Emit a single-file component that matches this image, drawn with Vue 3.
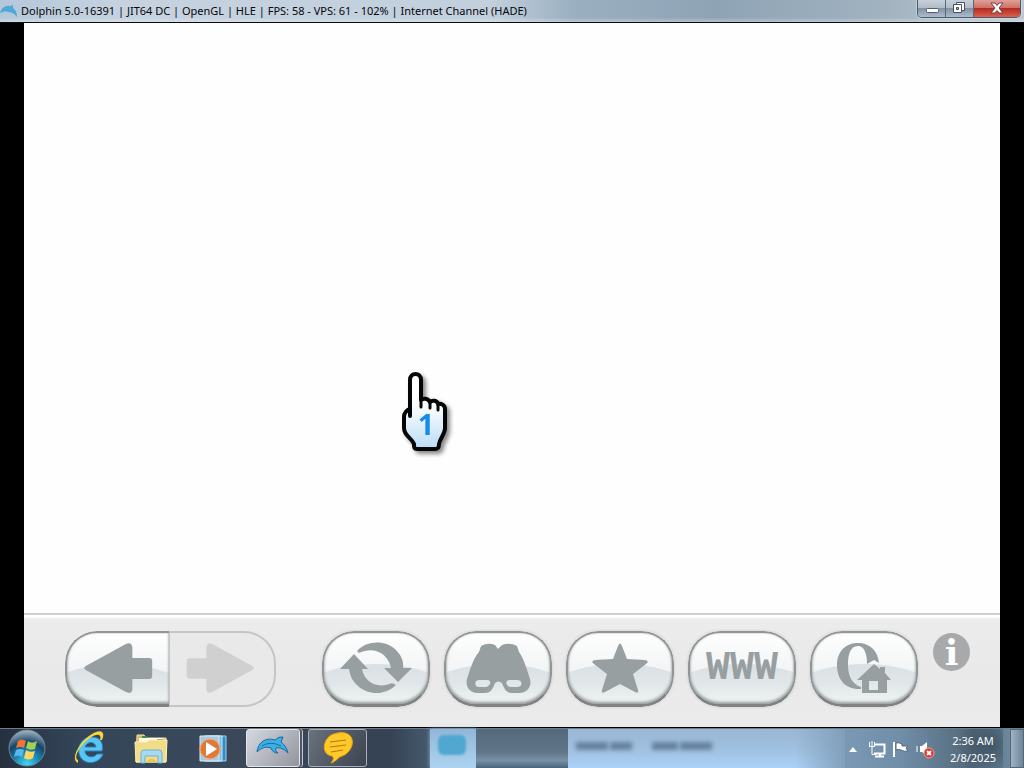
<script setup>
const title = 'Dolphin 5.0-16391 | JIT64 DC | OpenGL | HLE | FPS: 58 - VPS: 61 - 102% | Internet Channel (HADE)'
</script>

<template>
  <div class="desktop">
    <header class="titlebar">
      <svg class="title-icon" viewBox="0 0 18 14" aria-hidden="true">
        <path d="M0 9C1 4 6 1 10 2L13 1L13 4C16 6 17 9 17 13C14 9 11 8 8 8C5 7 3 8 0 9Z" fill="#4fa9d8" />
      </svg>
      <h1>{{ title }}</h1>
      <div class="window-controls">
        <button aria-label="Minimize">
          <svg viewBox="0 0 27 17"><rect x="8.500" y="8.500" width="12" height="4" rx="1" fill="#fff" stroke="#525c6b" /></svg>
        </button>
        <button aria-label="Restore">
          <svg viewBox="0 0 27 17">
            <path d="M10.500 2.500H18.500V10.500H10.500Z" fill="#fff" stroke="#46505f" />
            <path d="M7.500 4.500H15.500V12.500H7.500Z" fill="#fff" stroke="#46505f" />
            <path d="M10.500 7.500H12.500V9.500H10.500Z" fill="#9ba8b7" stroke="#46505f" />
          </svg>
        </button>
        <button class="close" aria-label="Close">
          <svg viewBox="0 0 46 17"><path d="M17 3h4l2 2.500 2-2.500h4l-4 5 4 5h-4l-2-2.500-2 2.500h-4l4-5z" fill="#fff" stroke="#6b4048" /></svg>
        </button>
      </div>
    </header>

    <main class="screen">
      <section class="page">
        <svg class="hand" viewBox="0 0 54 88" aria-label="Pointer 1">
          <defs>
            <linearGradient id="handFill" x1="0" y1="0" x2="0" y2="1">
              <stop offset=".4" stop-color="#fff" />
              <stop offset="1" stop-color="#b9dcf6" />
            </linearGradient>
          </defs>
          <path d="M9 45V9C9 1 20 1 20 9V29C22 27 27 27 29 31C31 29 36 29 37 33C40 32 44 34 44 38V57C44 63 39 67 38 73C38 78 36 78 34 78H16C13 78 13 76 13 73C11 67 3 65 3 57V46C3 42 6 39 9 38" fill="url(#handFill)" stroke="#050505" stroke-width="4" stroke-linejoin="round" stroke-linecap="round" />
          <path d="M20 29V36M29 31V37M37 34V39" fill="none" stroke="#050505" stroke-width="3" stroke-linecap="round" />
          <text x="25" y="64" text-anchor="middle" class="hand-number">1</text>
        </svg>
      </section>

      <nav class="toolbar" aria-label="Browser">
        <div class="history">
          <button class="back" aria-label="Back">
            <svg viewBox="0 0 105 76"><path d="M21 35L61 13Q67 10 68 16V27H85Q88 27 88 30V45Q88 48 85 48H68V59Q67 64 61 61L21 39Q18 37 21 35Z" /></svg>
          </button>
          <button class="forward" aria-label="Forward" disabled>
            <svg viewBox="0 0 106 76"><path d="M84 35L44 13Q38 10 37 16V27H20Q17 27 17 30V45Q17 48 20 48H37V59Q38 64 44 61L84 39Q87 37 84 35Z" /></svg>
          </button>
        </div>
        <div class="actions">
          <button class="pill" aria-label="Reload">
            <svg viewBox="0 0 108 76">
              <path d="M35 20C45 9 64 9 74 19C79 24 82 30 81 37H90L76 51L62 37H69C67 24 53 14 37 22Z" />
              <path d="M18 38L32 23L46 38H40C42 50 55 59 70 52L74 54C64 64 47 65 36 55C30 50 28 44 27 38Z" />
            </svg>
          </button>
          <button class="pill" aria-label="Search">
            <svg viewBox="0 0 108 76">
              <path fill-rule="evenodd" d="M37 15Q44 11 51 14L54 18L58 14Q66 11 73 15L75 21C79 26 83 38 86 48C88 56 83 62 75 62H68C62 62 60 57 58 52Q54 49 51 52C49 57 47 62 41 62H34C26 62 21 56 23 48C26 38 30 26 35 21ZM35 49C30 49 30 56 35 56H41C46 56 49 49 43 49ZM66 49C60 49 62 56 67 56H73C79 56 79 49 73 49Z" />
            </svg>
          </button>
          <button class="pill" aria-label="Favorites">
            <svg viewBox="0 0 108 76"><path d="M52 15Q54 10 56 15L61 28L79 29Q84 30 80 33L67 43L72 59Q73 63 69 61L54 53L39 61Q35 63 36 59L41 43L28 33Q24 30 29 29L47 28Z" /></svg>
          </button>
          <button class="pill www"><span>WWW</span></button>
          <button class="pill" aria-label="Home page">
            <svg viewBox="0 0 108 76">
              <path d="M51 58C36 59 27 49 27 34C27 20 36 12 48 12C60 12 68 20 69 32L64 29L57 33C57 22 54 15 48 15C40 15 38 24 38 34C38 45 42 53 51 56Z" />
              <path fill-rule="evenodd" d="M64 33L70 38V36H75V42L81 49H77V62H52V49H47ZM59 50V59H68V50Z" />
            </svg>
          </button>
        </div>
        <button class="info" aria-label="Information">i</button>
      </nav>
    </main>

    <footer class="taskbar">
      <div class="launchers">
        <button aria-label="Start">
          <svg viewBox="0 0 38 40">
            <defs>
              <radialGradient id="orb" cx=".5" cy=".95" r=".95">
                <stop offset="0" stop-color="#43d7f5" /><stop offset=".4" stop-color="#167fac" />
                <stop offset=".65" stop-color="#174466" /><stop offset="1" stop-color="#a9bac5" />
              </radialGradient>
            </defs>
            <circle cx="19" cy="20" r="18" fill="url(#orb)" stroke="#6d8799" />
            <path d="M10 13Q14 10 18 13L16 20Q12 18 8 20Z" fill="#f27336" />
            <path d="M20 13Q24 16 29 13L27 21Q22 23 18 20Z" fill="#a3cf52" />
            <path d="M8 22Q12 20 16 22L14 29Q10 26 6 29Z" fill="#59b8ed" />
            <path d="M18 22Q22 25 27 23L25 30Q20 33 16 30Z" fill="#ffd55b" />
          </svg>
        </button>
        <button aria-label="Internet Explorer">
          <svg viewBox="0 0 38 40">
            <path d="M32 23H15C15 29 23 31 27 26H33C30 35 17 38 11 30C5 21 11 9 22 9C30 9 34 15 32 23ZM15 19H26C25 13 17 13 15 19Z" fill="#58c5f2" stroke="#2382bd" fill-rule="evenodd" />
            <path d="M8 35C-1 31 11 12 22 6C30 1 36 3 32 12L30 12C32 6 27 5 20 10C9 18 3 30 8 32Z" fill="#f8d638" />
          </svg>
        </button>
        <button aria-label="File Explorer">
          <svg viewBox="0 0 38 40">
            <path d="M5 7H12L14 10H34V34H4Z" fill="#d9b966" stroke="#f4e4a3" />
            <path d="M7 10H31V17H7Z" fill="#fffbea" /><path d="M10 8h5v2h-5zM25 11h6v2h-6z" fill="#3b8956" />
            <path d="M3 14H15L17 12H35L34 34H4Z" fill="#f3dc87" stroke="#fff2b9" />
            <path d="M9 35V25Q9 22 12 22H27Q30 22 30 25V35H26V28H13V35Z" fill="#a6daef" stroke="#6bb3d6" />
            <path d="M14 34Q20 27 25 34Z" fill="#edc458" />
          </svg>
        </button>
        <button aria-label="Media Player">
          <svg viewBox="0 0 38 40">
            <path d="M13 8H32V33H13Z" fill="#388bc0" stroke="#97d6f4" /><path d="M10 8H28V33H10Z" fill="#76bde3" stroke="#c6ebfc" />
            <path d="M6 8H25V33H6Z" fill="#a4c8dd" stroke="#d8eaf3" />
            <circle cx="16" cy="21" r="10" fill="#df793a" stroke="#f5b181" /><path d="M12 14L23 21L12 28Z" fill="#fff" />
          </svg>
        </button>
      </div>
      <button class="task stacked" aria-label="Dolphin">
        <svg viewBox="0 0 38 38">
          <path d="M3 23C4 13 12 8 21 11Q25 7 29 8L27 13C31 16 33 20 34 24C30 20 26 18 22 19C21 21 22 23 24 24C20 24 18 22 17 19C12 17 7 19 3 23Z" fill="#3dafe6" stroke="#176b9b" />
          <path d="M8 17C14 13 21 14 27 17" fill="none" stroke="#176b9b" />
        </svg>
      </button>
      <button class="task" aria-label="Chat">
        <svg viewBox="0 0 38 38">
          <path d="M19 4C29 2 35 8 33 16C32 21 27 26 23 27C19 28 18 32 12 34C15 30 15 29 13 27C6 26 4 20 6 14C8 8 12 5 19 4Z" fill="#ffc928" stroke="#e9a30c" />
          <path d="M11 13L27 11M11 18L27 16M12 23L24 21" fill="none" stroke="#b27610" />
        </svg>
      </button>
      <div class="glass" aria-hidden="true">
        <div class="glass-light"><i></i></div>
        <div class="glass-dark"></div>
        <div class="glass-pane"><i></i><i></i><i></i><i></i></div>
      </div>
      <div class="tray">
        <button aria-label="Show hidden icons"><svg viewBox="0 0 24 24"><path d="M8 15L12 10L16 15Z" fill="#fff" /></svg></button>
        <button aria-label="Network">
          <svg viewBox="0 0 24 24">
            <path d="M9 7.500H19.500V16.500H9M10 19.500H19M15 17V19" fill="none" stroke="#fff" stroke-width="2" />
            <path d="M4.500 5V9.500H9.500V5M7 4V9M7 10V17.500H11" fill="none" stroke="#fff" />
          </svg>
        </button>
        <button aria-label="Action Center">
          <svg viewBox="0 0 24 24"><path d="M5 5V20" stroke="#fff" stroke-width="2" /><path d="M7 6Q10 5 13 7V9H19L17 11L19 14Q15 15 12 13Q9 12 7 13Z" fill="#fff" stroke="#53687b" /></svg>
        </button>
        <button aria-label="Volume muted">
          <svg viewBox="0 0 24 24">
            <path d="M7 9H9L14 5V19L9 15H7Z" fill="#fff" /><path d="M4 9V15" stroke="#fff" />
            <circle cx="16" cy="16" r="5" fill="#d7392f" stroke="#f0a09a" /><path d="M14 14L18 18M18 14L14 18" stroke="#fff" stroke-width="2" />
          </svg>
        </button>
      </div>
      <button class="clock"><time>2:36 AM</time><time>2/8/2025</time></button>
      <button class="show-desktop" aria-label="Show desktop"></button>
    </footer>
  </div>
</template>

<style>
body { margin: 0; background: #000; }
</style>

<style scoped>
* { box-sizing: border-box; }
button { margin: 0; padding: 0; border: 0; background: none; font: inherit; color: inherit; }
svg { display: block; }
.desktop {
  display: flex;
  flex-direction: column;
  min-height: 100vh;
  font-family: "Noto Sans", "Open Sans", sans-serif;
}
.titlebar {
  display: flex;
  align-items: center;
  height: 23px;
  border-bottom: 1px solid #080b10;
  background:
    linear-gradient(#ffffff22 0 80%, #ffffff66),
    linear-gradient(90deg, #a9bfd3, #bdcbdb 12%, #b9c8d8 48%, #8ba3b7 56%, #7d96aa 70%, #91a5b5 85%, #b4c0cb);
}
.title-icon { width: 18px; height: 14px; }
h1 {
  flex: 1;
  margin: 0 0 0 3px;
  font-size: 11px;
  font-weight: 400;
  line-height: 20px;
  color: #05070a;
  white-space: nowrap;
}
.window-controls {
  display: flex;
  align-self: flex-start;
  height: 18px;
  margin-right: 3px;
  border: 1px solid #4d5b69;
  border-top: 0;
  border-radius: 0 0 5px 5px;
  overflow: hidden;
  box-shadow: 0 0 1px 1px #dbe4ec88;
}
.window-controls button {
  width: 28px;
  border-right: 1px solid #596877;
  background: linear-gradient(#c6d0da, #aebbc8 48%, #8292a3 50%, #aebdcd);
}
.window-controls svg { width: 27px; height: 17px; }
.window-controls .close {
  width: 46px;
  border-right: 0;
  background: linear-gradient(#dfa198, #ce6e62 48%, #b52a22 50%, #d9624c);
}
.window-controls .close svg { width: 46px; }
.screen {
  display: flex;
  flex: 1;
  flex-direction: column;
  padding: 0 24px 1px;
  background: #000;
}
.page { position: relative; flex: 1; min-height: 480px; background: #fefefe; }
.hand {
  position: absolute;
  left: 377px;
  top: 348px;
  width: 54px;
  height: 88px;
  filter: drop-shadow(3px 3px 2px #0007);
}
.hand-number { font: 700 29px "Open Sans", sans-serif; fill: #188bea; }
.toolbar {
  display: flex;
  align-items: flex-start;
  height: 114px;
  padding: 16px 30px 0 41px;
  border-top: 2px solid #cfcfcf;
  background: linear-gradient(#fff 0 2px, #ececec 4px, #e9e9e9 50%, #ebebeb);
}
.history { display: flex; width: 211px; height: 76px; margin-right: 46px; }
.history button { flex: 1; }
.history svg, .pill svg { position: relative; width: 100%; height: 100%; fill: #989fa1; }
.back, .pill {
  position: relative;
  overflow: hidden;
  background: linear-gradient(#fff, #f3f5f6 48%, #e9edef 72%, #f1f4f3);
}
.back::before, .pill::before {
  content: "";
  position: absolute;
  inset: 33px 0 0;
  background: linear-gradient(#d9e0e4, #e1e7e9 45%, #f1f4f3);
  clip-path: ellipse(80% 100% at 50% 100%);
}
.back::after, .pill::after {
  content: "";
  position: absolute;
  inset: 0;
  border: 2px solid #929595;
  border-bottom: 3px solid #7f8282;
  border-radius: 32px;
  box-shadow: inset 0 -2px 3px #9a9e9e, inset 0 0 2px #b5b8b8;
}
.back, .back::after { border-radius: 32px 0 0 32px; }
.back::after { border-right: 0; }
.forward { border: 2px solid #c5c5c5; border-left-width: 1px; border-radius: 0 32px 32px 0; background: #e9e9e9; }
.history .forward svg { height: 76px; margin-top: -2px; fill: #d0d0d0; }
.actions { display: flex; gap: 14px; }
.pill { width: 108px; height: 76px; border-radius: 32px; box-shadow: 0 0 2px 1px #d9d9d9; }
.www span {
  position: relative;
  font: 700 40px/76px "Liberation Mono", monospace;
  color: #989fa1;
}
.info {
  width: 37px;
  height: 38px;
  margin-top: 2px;
  margin-left: auto;
  border-radius: 50%;
  background: #a7a9aa;
  color: #fff;
  font: 700 36px/36px "DejaVu Serif", serif;
}
.taskbar {
  display: flex;
  align-items: stretch;
  height: 40px;
  border-top: 1px solid #6c7c8a;
  background: linear-gradient(90deg, #26313f, #35465a 8%, #3a485a 22%, #354354 38%, #465a6d 42%, #7f9db8 80%, #708ea8 88%, #536879 95%, #7794aa);
}
.launchers { display: flex; gap: 24px; margin: 0 14px 0 8px; }
.launchers button { width: 38px; }
.launchers svg { width: 38px; height: 40px; margin-top: -1px; }
.task {
  display: flex;
  align-items: center;
  justify-content: center;
  width: 59px;
  height: 38px;
  border: 1px solid #aab0b9;
  border-radius: 3px;
  background: linear-gradient(120deg, #68717c, #3c444f);
}
.task svg { width: 38px; height: 38px; }
.stacked {
  width: 54px;
  margin-right: 8px;
  border-color: #e2e7ec;
  background: linear-gradient(130deg, #d5d8df, #92959e);
  box-shadow: 2px 0 #4e5663, 3px 0 #c3cad1;
}
.glass { display: flex; flex: 1; min-width: 0; margin-left: 63px; }
.glass-light { width: 46px; padding: 6px 8px; background: linear-gradient(#91b6d6, #add3f3); box-shadow: 0 0 4px #90b5d5; }
.glass-light i { display: block; width: 28px; height: 20px; border-radius: 6px; background: #50a8d1; filter: blur(1px); }
.glass-dark { width: 92px; background: linear-gradient(#536a7d, #607687 60%, #7891a7 80%, #48637a); }
.glass-pane {
  display: flex;
  flex: 1;
  align-items: flex-start;
  gap: 2px;
  padding: 13px 8px;
  background: linear-gradient(90deg, transparent 82%, #819fb9), linear-gradient(#9bb7d4, #9fc0e0 50%, #abd1f7);
}
.glass-pane i { width: 32px; height: 8px; background: #65829e; filter: blur(2px); }
.glass-pane i:nth-child(2) { width: 22px; }
.glass-pane i:nth-child(3) { width: 26px; margin-left: 18px; }
.tray { display: flex; align-items: center; margin-right: 6px; margin-left: -4px; }
.tray button, .tray svg { width: 24px; height: 24px; }
.clock {
  display: flex;
  flex-direction: column;
  align-items: center;
  justify-content: center;
  width: 60px;
  margin-right: 7px;
  font-size: 11px;
  line-height: 17px;
  color: #fff;
  background: radial-gradient(circle at 80% 40%, #2f4557aa, transparent 65%);
}
.show-desktop { width: 14px; border: 1px solid #536779; background: linear-gradient(90deg, #a1b3c3, #6d8599); }
</style>
